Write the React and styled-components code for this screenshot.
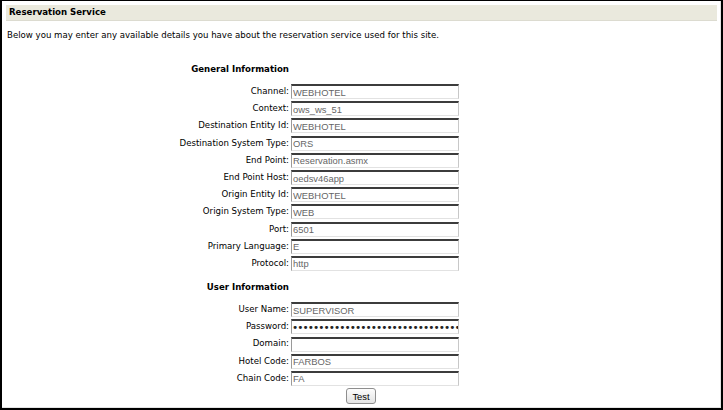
import React from "react";
import styled, { createGlobalStyle } from "styled-components";

const Global = createGlobalStyle`
  html, body { margin: 0; padding: 0; background: #fff; }
  * { box-sizing: border-box; }
`;

const Frame = styled.div`
  width: 723px;
  height: 410px;
  border: 2px solid #000;
  border-top-width: 1px;
  background: #fff;
  font-family: "DejaVu Sans", Verdana, sans-serif;
  color: #000;
  overflow: hidden;
`;

const Inner = styled.div`
  height: 100%;
  border-right: 1px solid #e4e4e4;
  border-bottom: 1px solid #e4e4e4;
  padding: 4px 3px 0 4px;
  display: flex;
  flex-direction: column;
`;

const Header = styled.div`
  height: 16px;
  background: #eae9dd;
  border-bottom: 1px solid #dcdbd0;
  font-weight: bold;
  font-size: 8.6px;
  line-height: 15px;
  padding-left: 3px;
`;

const Intro = styled.p`
  margin: 8px 0 0 1px;
  font-size: 8.6px;
  line-height: 12px;
`;

const Form = styled.div`
  margin-top: 22px;
  display: grid;
  grid-template-columns: 283px 168px;
  column-gap: 2px;
  align-items: center;
`;

const Heading = styled.div`
  grid-column: 1;
  align-self: start;
  text-align: right;
  font-weight: bold;
  font-size: 8.6px;
  height: ${(p) => p.$h}px;
  padding-top: ${(p) => p.$pt || 0}px;
  line-height: 12px;
`;

const Spacer = styled.div`
  grid-column: 2;
`;

const Label = styled.label`
  grid-column: 1;
  text-align: right;
  font-size: 8.6px;
  height: 17.2px;
  line-height: 17.2px;
  white-space: nowrap;
`;

const Input = styled.input`
  grid-column: 2;
  width: 168px;
  height: 15px;
  margin: 0;
  padding: 0 1px;
  border-style: solid;
  border-width: 2px 1px 1px 1px;
  border-color: #3c3c3c #c8c8c8 #e2e2e2 #9a9a9a;
  background: #fff;
  font-family: "Liberation Sans", Arial, sans-serif;
  font-size: 9.4px;
  color: #666;
  outline: none;

  &[type="password"] {
    font-family: "DejaVu Sans", sans-serif;
    font-size: 10.5px;
    letter-spacing: -0.95px;
    color: #222;
    padding: 0;
  }
`;

const ButtonRow = styled.div`
  display: flex;
  margin-top: 1px;
`;

const Button = styled.button`
  margin-left: 340px;
  width: 30px;
  height: 16px;
  padding: 0;
  border: 1px solid #8e8e8e;
  border-radius: 3px;
  background: linear-gradient(#fdfdfd, #e3e3e3);
  font-family: "Liberation Sans", Arial, sans-serif;
  font-size: 9.4px;
  color: #000;
`;

const general = [
  ["Channel", "WEBHOTEL"],
  ["Context", "ows_ws_51"],
  ["Destination Entity Id", "WEBHOTEL"],
  ["Destination System Type", "ORS"],
  ["End Point", "Reservation.asmx"],
  ["End Point Host", "oedsv46app"],
  ["Origin Entity Id", "WEBHOTEL"],
  ["Origin System Type", "WEB"],
  ["Port", "6501"],
  ["Primary Language", "E"],
  ["Protocol", "http"],
];

const user = [
  ["User Name", "SUPERVISOR"],
  ["Password", "••••••••••••••••••••••••••••••••", "password"],
  ["Domain", ""],
  ["Hotel Code", "FARBOS"],
  ["Chain Code", "FA"],
];

const Rows = ({ rows }) =>
  rows.map(([l, v, t]) => (
    <React.Fragment key={l}>
      <Label>{l}:</Label>
      <Input type={t || "text"} defaultValue={v} readOnly />
    </React.Fragment>
  ));

export default function App() {
  return (
    <>
      <Global />
      <Frame>
        <Inner>
          <Header>Reservation Service</Header>
          <Intro>
            Below you may enter any available details you have about the
            reservation service used for this site.
          </Intro>
          <Form>
            <Heading $h={20}>General Information</Heading>
            <Spacer />
            <Rows rows={general} />
            <Heading $h={29} $pt={9}>User Information</Heading>
            <Spacer />
            <Rows rows={user} />
          </Form>
          <ButtonRow>
            <Button>Test</Button>
          </ButtonRow>
        </Inner>
      </Frame>
    </>
  );
}
